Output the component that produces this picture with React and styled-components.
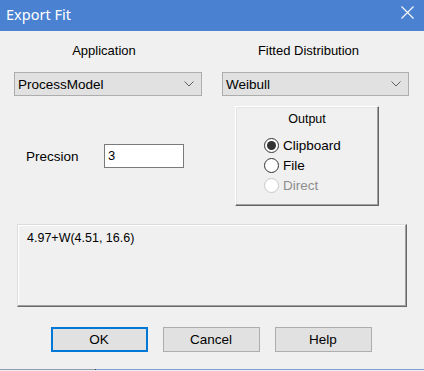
import React from "react";
import styled, { createGlobalStyle } from "styled-components";

const Global = createGlobalStyle`
  html, body {
    margin: 0;
    padding: 0;
    background: #f0f0f0;
  }
  * { box-sizing: border-box; }
`;

const Window = styled.div`
  width: 424px;
  height: 371px;
  display: flex;
  flex-direction: column;
  background: #f0f0f0;
  font-family: "Liberation Sans", Arial, sans-serif;
  font-size: 13px;
  color: #000;
  overflow: hidden;
`;

const TitleBar = styled.div`
  height: 31px;
  flex: none;
  background: #4a81d0;
  color: #fff;
  display: flex;
  align-items: flex-start;
  justify-content: space-between;
  padding: 4px 10px 0 6px;
  font-family: "Noto Sans", "Open Sans", sans-serif;
  font-size: 14.5px;
`;

const CloseX = styled.svg`
  margin-top: 2px;
  width: 13px;
  height: 13px;
`;

const Body = styled.div`
  flex: 1;
  display: flex;
  flex-direction: column;
  padding: 12px 15px 0 14px;
`;

const TopGrid = styled.div`
  display: grid;
  grid-template-columns: 188px 187px;
  column-gap: 20px;
  row-gap: 13px;
`;

const FieldLabel = styled.div`
  height: 16px;
  line-height: 16px;
  text-align: center;
  padding-right: ${p => p.$shift}px;
`;

const Select = styled.div`
  height: 24px;
  background: #e1e1e1;
  border: 1px solid #adadad;
  display: flex;
  align-items: center;
  justify-content: space-between;
  padding: 0 7px 0 3px;
  font-size: 13.5px;
`;

const Chevron = styled.svg`
  width: 10px;
  height: 6px;
`;

const MiddleRow = styled.div`
  margin-top: 10px;
  height: 100px;
  display: grid;
  grid-template-columns: 188px 1fr;
  column-gap: 20px;
`;

const PrecisionCell = styled.div`
  display: flex;
  align-items: center;
  padding-left: 12px;
`;

const PrecisionLabel = styled.span`
  width: 78px;
  font-size: 13.5px;
`;

const NumberInput = styled.div`
  width: 80px;
  height: 24px;
  background: #fff;
  border: 1px solid #7a7a7a;
  padding: 3px 0 0 3px;
  font-size: 13px;
`;

const GroupBox = styled.div`
  margin-left: 13px;
  width: 144px;
  height: 100px;
  border: 1px solid;
  border-color: #ffffff #646464 #646464 #ffffff;
  box-shadow: inset -1px -1px 0 #a0a0a0, inset 1px 1px 0 #e3e3e3;
  display: flex;
  flex-direction: column;
  align-items: center;
  padding-top: 4px;
`;

const GroupTitle = styled.div`
  font-size: 12.5px;
  height: 16px;
  line-height: 16px;
  margin-bottom: 8px;
`;

const RadioList = styled.div`
  display: flex;
  flex-direction: column;
  align-self: flex-start;
  margin-left: 28px;
`;

const RadioRow = styled.div`
  display: flex;
  align-items: center;
  height: 20px;
  gap: 4px;
  font-size: 13.5px;
  color: ${p => (p.$disabled ? "#8d8d8d" : "#000")};
`;

const RadioCircle = styled.span`
  width: 15px;
  height: 15px;
  border-radius: 50%;
  border: 1px solid ${p => (p.$disabled ? "#c8c8c8" : "#333")};
  background: #fff;
  display: flex;
  align-items: center;
  justify-content: center;
  &::after {
    content: "";
    width: 9px;
    height: 9px;
    border-radius: 50%;
    background: ${p => (p.$checked ? "#333" : "transparent")};
  }
`;

const ResultBox = styled.div`
  margin-top: 18px;
  margin-left: 3px;
  width: 390px;
  height: 83px;
  border: 1px solid;
  border-color: #dcdcdc #696969 #696969 #dcdcdc;
  box-shadow: inset -1px -1px 0 #a0a0a0, inset 1px 1px 0 #ffffff;
  padding: 6px 0 0 9px;
  font-size: 12.5px;
`;

const ButtonRow = styled.div`
  margin-top: 20px;
  display: flex;
  justify-content: center;
  gap: 15px;
  padding-right: 1px;
`;

const Button = styled.div`
  width: 97px;
  height: 25px;
  background: #e1e1e1;
  border: ${p => (p.$default ? "2px solid #0078d7" : "1px solid #adadad")};
  display: flex;
  align-items: center;
  justify-content: center;
  font-size: 13.5px;
`;

const BottomEdge = styled.div`
  margin-top: auto;
  margin-bottom: 1px;
  height: 1px;
  display: flex;
`;

const EdgePart = styled.div`
  width: ${p => p.$w || "auto"};
  flex: ${p => (p.$w ? "none" : 1)};
  background: ${p => p.$color};
`;

function Dropdown({ value }) {
  return (
    <Select>
      <span>{value}</span>
      <Chevron viewBox="0 0 10 6">
        <path d="M0.5 0.5 L5 5 L9.5 0.5" fill="none" stroke="#606060" strokeWidth="1" />
      </Chevron>
    </Select>
  );
}

function Radio({ label, checked, disabled }) {
  return (
    <RadioRow $disabled={disabled}>
      <RadioCircle $checked={checked} $disabled={disabled} />
      {label}
    </RadioRow>
  );
}

export default function App() {
  return (
    <>
      <Global />
      <Window>
        <TitleBar>
          <span>Export Fit</span>
          <CloseX viewBox="0 0 13 13">
            <path d="M0.5 0.5 L12.5 12.5 M12.5 0.5 L0.5 12.5" stroke="#fff" strokeWidth="1.1" />
          </CloseX>
        </TitleBar>
        <Body>
          <TopGrid>
            <FieldLabel $shift={8}>Application</FieldLabel>
            <FieldLabel $shift={14}>Fitted Distribution</FieldLabel>
            <Dropdown value="ProcessModel" />
            <Dropdown value="Weibull" />
          </TopGrid>

          <MiddleRow>
            <PrecisionCell>
              <PrecisionLabel>Precsion</PrecisionLabel>
              <NumberInput>3</NumberInput>
            </PrecisionCell>
            <GroupBox>
              <GroupTitle>Output</GroupTitle>
              <RadioList>
                <Radio label="Clipboard" checked />
                <Radio label="File" />
                <Radio label="Direct" disabled />
              </RadioList>
            </GroupBox>
          </MiddleRow>

          <ResultBox>4.97+W(4.51, 16.6)</ResultBox>

          <ButtonRow>
            <Button $default>OK</Button>
            <Button>Cancel</Button>
            <Button>Help</Button>
          </ButtonRow>
        </Body>
        <BottomEdge>
          <EdgePart $w="95px" $color="#8d9bb3" />
          <EdgePart $w="1px" $color="#404040" />
          <EdgePart $color="#7d9fd6" />
        </BottomEdge>
      </Window>
    </>
  );
}
